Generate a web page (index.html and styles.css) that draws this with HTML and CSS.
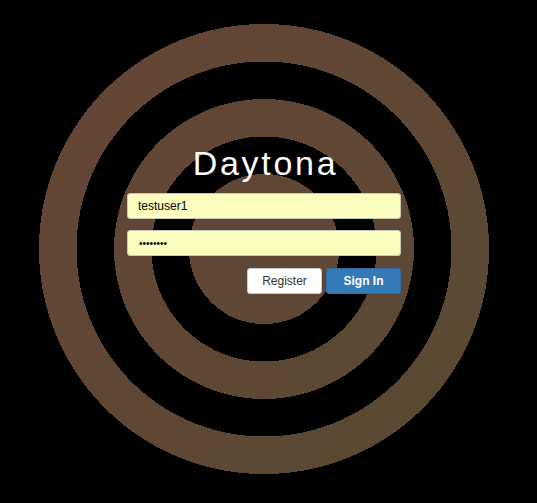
FILE: index.html
```html
<!DOCTYPE html>
<html lang="en">
<head>
<meta charset="utf-8">
<title>Daytona</title>
<link rel="stylesheet" href="styles.css">
</head>
<body>
<main class="stage">
  <h1 class="title">Daytona</h1>
  <form class="login">
    <input class="field" type="text" value="testuser1">
    <input class="field field-password" type="password" value="password">
    <div class="actions">
      <button type="button" class="btn btn-register">Register</button>
      <button type="button" class="btn btn-signin">Sign In</button>
    </div>
  </form>
</main>
</body>
</html>
```
FILE: styles.css
```css
html, body {
  margin: 0;
  height: 100%;
}
body {
  background-color: #000;
  background-image:
    radial-gradient(circle at 264px 249px,
      transparent 0 75px,
      #000 75px 112.5px,
      transparent 112.5px 150px,
      #000 150px 187.5px,
      transparent 187.5px 225px,
      #000 225px),
    linear-gradient(135deg, #654535 0%, #5f4735 50%, #564b33 100%);
  background-repeat: no-repeat;
  background-size: 100% 100%, 450px 450px;
  background-position: 0 0, 39px 24px;
  font-family: "Liberation Sans", Arial, Helvetica, sans-serif;
  overflow: hidden;
}
.stage {
  width: 528px;
  padding-top: 143px;
  display: flex;
  flex-direction: column;
  align-items: center;
}
.title {
  margin: 0 0 10px 3px;
  font-size: 34px;
  line-height: 40px;
  font-weight: normal;
  letter-spacing: 2.7px;
  color: #fff;
}
.login {
  width: 274px;
  display: flex;
  flex-direction: column;
  gap: 11px;
}
.field {
  box-sizing: border-box;
  width: 100%;
  height: 26px;
  margin: 0;
  padding: 0 10px;
  border: 1px solid #c9c9b8;
  border-radius: 3px;
  background: #fbfebe;
  font-family: "Liberation Sans", Arial, sans-serif;
  font-size: 12px;
  color: #000;
  outline: none;
}
.field-password {
  font-size: 10px;
  padding-left: 11px;
}
.actions {
  display: flex;
  justify-content: flex-end;
  gap: 4px;
  margin-top: 1px;
}
.btn {
  box-sizing: border-box;
  width: 75px;
  height: 26px;
  margin: 0;
  padding: 0;
  border-radius: 3px;
  font-family: "Liberation Sans", Arial, sans-serif;
  font-size: 12px;
}
.btn-register {
  background: #fff;
  border: 1px solid #cccccc;
  color: #333;
}
.btn-signin {
  background: #337ab7;
  border: 1px solid #2e6da4;
  color: #fff;
  font-weight: bold;
}
```
